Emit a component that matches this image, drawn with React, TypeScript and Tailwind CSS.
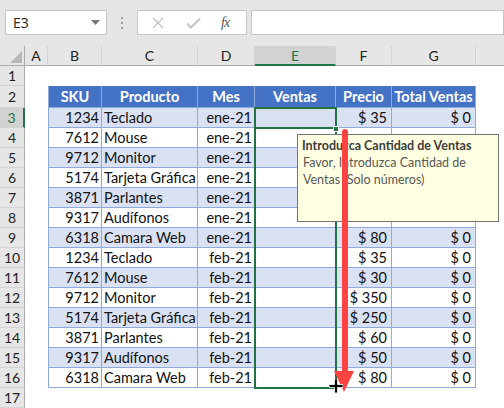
import React from "react";

const rows = [
  { sku: "1234", prod: "Teclado", mes: "ene-21", precio: "$ 35" },
  { sku: "7612", prod: "Mouse", mes: "ene-21", precio: "$ 30" },
  { sku: "9712", prod: "Monitor", mes: "ene-21", precio: "$ 350" },
  { sku: "5174", prod: "Tarjeta Gráfica", mes: "ene-21", precio: "$ 250" },
  { sku: "3871", prod: "Parlantes", mes: "ene-21", precio: "$ 60" },
  { sku: "9317", prod: "Audífonos", mes: "ene-21", precio: "$ 50" },
  { sku: "6318", prod: "Camara Web", mes: "ene-21", precio: "$ 80" },
  { sku: "1234", prod: "Teclado", mes: "feb-21", precio: "$ 35" },
  { sku: "7612", prod: "Mouse", mes: "feb-21", precio: "$ 30" },
  { sku: "9712", prod: "Monitor", mes: "feb-21", precio: "$ 350" },
  { sku: "5174", prod: "Tarjeta Gráfica", mes: "feb-21", precio: "$ 250" },
  { sku: "3871", prod: "Parlantes", mes: "feb-21", precio: "$ 60" },
  { sku: "9317", prod: "Audífonos", mes: "feb-21", precio: "$ 50" },
  { sku: "6318", prod: "Camara Web", mes: "feb-21", precio: "$ 80" },
];

function RowHead({ n, active, h = "h-[20px]" }: { n: number; active?: boolean; h?: string }) {
  return (
    <div
      className={`w-[25px] ${h} shrink-0 flex items-center justify-center border-b border-[#d4d4d4] text-[14px] ${
        active
          ? "bg-[#d2d2d2] text-[#217346] border-r-2 border-r-[#217346]"
          : "bg-[#e6e6e6] text-[#222] border-r border-r-[#ababab]"
      }`}
    >
      {n}
    </div>
  );
}

function ColHead({ label, w, active }: { label: string; w: string; active?: boolean }) {
  return (
    <div
      className={`${w} h-[20px] shrink-0 flex items-center justify-center text-[14px] border-r border-r-[#d4d4d4] ${
        active
          ? "bg-[#d2d2d2] text-[#217346] border-b-2 border-b-[#217346]"
          : "bg-[#e6e6e6] text-[#222] border-b border-b-[#ababab]"
      }`}
    >
      {label}
    </div>
  );
}

export default function App() {
  return (
    <div className="relative w-[504px] h-[408px] overflow-hidden bg-white font-['Lato',sans-serif] text-[#111]">
      {/* Formula bar */}
      <div className="h-[46px] bg-[#e6e6e6] flex items-start pt-[10px] pl-[5px]">
        <div className="w-[102px] h-[25px] bg-white border border-[#c6c6c6] flex items-center justify-between pl-[7px] pr-[6px]">
          <span className="text-[14px] font-['Open_Sans',sans-serif] text-[#222]">E3</span>
          <svg width="9" height="5" viewBox="0 0 9 5">
            <path d="M0 0h9L4.5 5z" fill="#777" />
          </svg>
        </div>
        <div className="w-[30px] h-[25px] flex flex-col items-center justify-center gap-[3px]">
          <span className="w-[2px] h-[2px] bg-[#a0a0a0]" />
          <span className="w-[2px] h-[2px] bg-[#a0a0a0]" />
          <span className="w-[2px] h-[2px] bg-[#a0a0a0]" />
        </div>
        <div className="w-[110px] h-[25px] bg-white border border-[#c6c6c6] flex items-center pl-[14px]">
          <svg width="12" height="12" viewBox="0 0 12 12">
            <path d="M1 1l10 10M11 1L1 11" stroke="#c3c3c3" strokeWidth="1.4" fill="none" />
          </svg>
          <svg width="15" height="12" viewBox="0 0 15 12" className="ml-[22px]">
            <path d="M1 6.5l4 4L14 1.5" stroke="#c3c3c3" strokeWidth="2" fill="none" />
          </svg>
          <span className="ml-[20px] text-[14px] italic font-['Liberation_Serif',serif] text-[#555] tracking-[-1px]">
            fx
          </span>
        </div>
        <div className="flex-1 h-[25px] bg-white border border-[#c6c6c6] ml-[4px]" />
      </div>

      {/* Column headers */}
      <div className="flex">
        <div className="w-[25px] h-[20px] shrink-0 bg-[#e6e6e6] border-r border-r-[#ababab] border-b border-b-[#ababab] flex items-end justify-end p-[2px]">
          <svg width="12" height="12" viewBox="0 0 12 12">
            <path d="M12 0v12H0z" fill="#b8b8b8" />
          </svg>
        </div>
        <ColHead label="A" w="w-[23px]" />
        <ColHead label="B" w="w-[54px]" />
        <ColHead label="C" w="w-[96px]" />
        <ColHead label="D" w="w-[57px]" />
        <ColHead label="E" w="w-[81px]" active />
        <ColHead label="F" w="w-[56px]" />
        <ColHead label="G" w="w-[84px]" />
        <ColHead label="" w="w-[40px]" />
      </div>

      {/* Row 1 */}
      <div className="flex">
        <RowHead n={1} />
        <div className="flex-1" />
      </div>

      {/* Row 2: table header */}
      <div className="flex text-[14.5px]">
        <RowHead n={2} h="h-[22px]" />
        <div className="w-[23px] shrink-0" />
        {[
          ["SKU", "w-[54px] border-l"],
          ["Producto", "w-[96px]"],
          ["Mes", "w-[57px]"],
          ["Ventas", "w-[81px]"],
          ["Precio", "w-[56px]"],
          ["Total Ventas", "w-[84px]"],
        ].map(([label, cls]) => (
          <div
            key={label}
            className={`${cls} h-[22px] shrink-0 bg-[#4472c4] text-white font-bold flex items-center justify-center border-r border-b border-[#8ea9db] whitespace-nowrap`}
          >
            {label}
          </div>
        ))}
      </div>

      {/* Data rows (F/G of rows 4-8 sit under the input message) */}
      {rows.map((r, i) => {
        const band = i % 2 === 0 ? "bg-[#d9e1f2]" : "bg-white";
        const cell = `h-[20px] shrink-0 flex items-center border-r border-b border-[#8ea9db] whitespace-nowrap overflow-hidden ${band}`;
        const covered = i >= 1 && i <= 5;
        return (
          <div key={i} className="flex text-[14.5px]">
            <RowHead n={i + 3} active={i === 0} />
            <div className="w-[23px] shrink-0" />
            <div className={`${cell} w-[54px] border-l justify-end pr-[2px]`}>{r.sku}</div>
            <div className={`${cell} w-[96px] pl-[2px]`}>{r.prod}</div>
            <div className={`${cell} w-[57px] justify-end pr-[2px]`}>{r.mes}</div>
            <div className={`${cell} w-[81px]`} />
            <div className={`${cell} w-[56px] justify-end pr-[4px]`}>{covered ? "" : r.precio}</div>
            <div className={`${cell} w-[84px] justify-end pr-[4px]`}>{covered ? "" : "$ 0"}</div>
          </div>
        );
      })}

      {/* Row 17 */}
      <div className="flex">
        <RowHead n={17} />
        <div className="flex-1" />
      </div>

      {/* Selection: range E3:E16 and active cell E3 */}
      <div className="absolute left-[254px] top-[107px] w-[83px] h-[282px] border-2 border-[#217346]" />
      <div className="absolute left-[254px] top-[107px] w-[83px] h-[22px] border-2 border-[#217346]" />
      <div className="absolute left-[333px] top-[126px] w-[6px] h-[6px] bg-[#217346] border border-white" />

      {/* Input message tooltip */}
      <div className="absolute left-[297px] top-[134px] w-[202px] h-[88px] bg-[#ffffe1] border border-[#767676] pl-[4px] pt-[2px] text-[12.5px] leading-[17px]">
        <div className="font-bold text-[#3c3c3c] whitespace-nowrap">Introduzca Cantidad de Ventas</div>
        <div className="text-[#595959] pl-[1px]">
          Favor, Introduzca Cantidad de
          <br />
          Ventas (Solo números)
        </div>
      </div>

      {/* Red arrow */}
      <svg className="absolute left-[332px] top-[126px]" width="24" height="268" viewBox="0 0 24 268">
        <path d="M10 6a3 3 0 0 1 6 0V246h-6z" fill="#ff4343" />
        <path d="M2 245h20l-10 21z" fill="#ff4343" />
      </svg>

      {/* Fill cursor */}
      <svg className="absolute left-[329px] top-[379px]" width="14" height="14" viewBox="0 0 14 14">
        <path d="M5.5 0h3v5.5H14v3H8.5V14h-3V8.5H0v-3h5.5z" fill="#000" stroke="#fff" strokeWidth="0.8" />
      </svg>
    </div>
  );
}
